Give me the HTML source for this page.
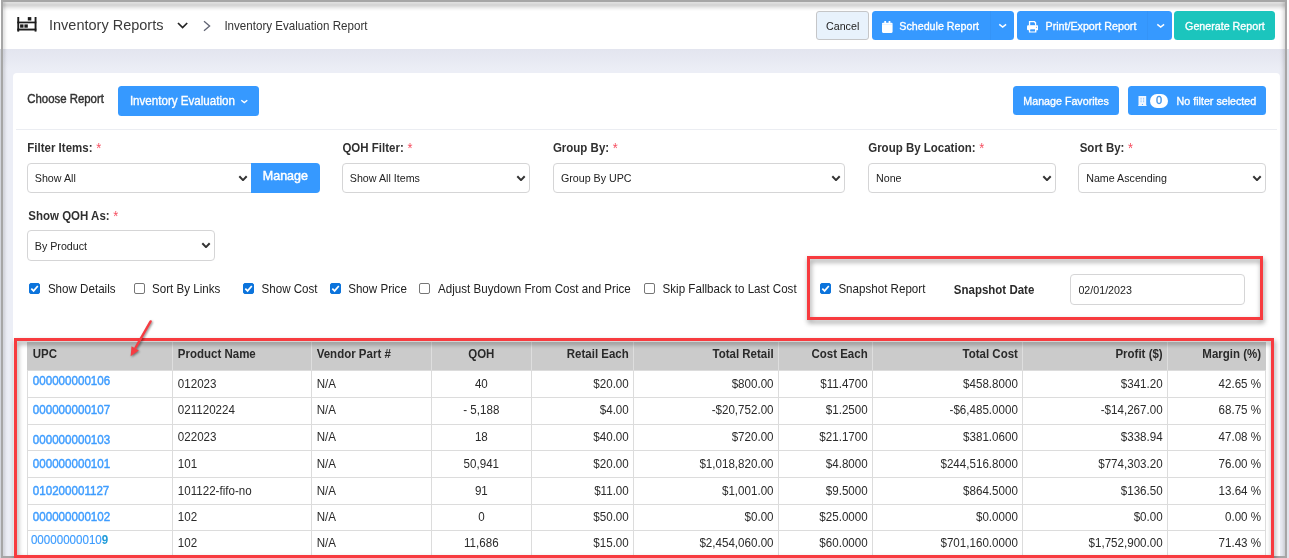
<!DOCTYPE html>
<html lang="en">
<head>
<meta charset="utf-8">
<title>Inventory Evaluation Report</title>
<style>
*{box-sizing:border-box;margin:0;padding:0}
html,body{width:1289px;height:558px;overflow:hidden;background:#fff}
body{font-family:"Liberation Sans",Arial,sans-serif;color:#222;position:relative;font-size:12px}
.abs{position:absolute}
.t{position:absolute;white-space:nowrap;transform-origin:0 84.65%}
.t i{color:#f64e60;font-style:normal;font-weight:normal;font-size:1.12em;line-height:0;position:relative;left:.5px;top:.6px}
.btn{position:absolute;background:#3699ff;border-radius:3.5px}
.sel{position:absolute;border:1px solid #d5d5d6;border-radius:4px;background:#fff}
.cb{position:absolute;width:11px;height:11px;border:1px solid #767676;border-radius:2px;background:#fff}
.cb.on{background:#0c74dc;border-color:#0c74dc}
.cb svg{position:absolute;left:-1px;top:-1px}
.redbox{position:absolute;border:3px solid #f73b3f;filter:drop-shadow(1.5px 3.5px 2.500px rgba(0,0,0,.42));pointer-events:none}
.hl{position:absolute;height:1px;background:#dcdcdc}
.vl{position:absolute;width:1px;background:#dcdcdc}
</style>
</head>
<body>
<div class="abs" style="left:1px;top:0;width:1286px;height:558px;background:#eceef6;border:2px solid #a6a6a6"></div>
<div class="abs" style="left:3px;top:2px;width:1282px;height:47px;background:#fff"></div>
<div class="abs" style="left:3px;top:49px;width:1282px;height:24px;background:linear-gradient(to bottom,rgba(70,70,120,.055),rgba(70,70,120,.03) 40%,rgba(70,70,120,0) 90%)"></div>
<div class="abs" style="left:13px;top:73px;width:1267px;height:483px;background:#fff;border-radius:4px 4px 0 0"></div>
<svg class="abs" style="left:17px;top:17px" width="20" height="15" viewBox="0 0 20 15"><g fill="#1c1c1c"><rect x="0.3" y="0" width="1.9" height="14.6"/><rect x="17.6" y="0" width="1.9" height="14.6"/><rect x="0.3" y="4.6" width="19" height="1.7"/><rect x="0.3" y="11.6" width="19" height="1.9"/><rect x="10.800" y="0.100" width="3.500" height="3.400"/><rect x="3.100" y="7.400" width="3.400" height="3.300"/><rect x="7.400" y="7.400" width="3.400" height="3.300"/></g></svg>
<div class="t" style="left:49.00px;top:17.93px;font-size:14.5px;line-height:14.5px;color:#3a3a3a;transform:scaleY(1.07);">Inventory Reports</div>
<svg class="abs" style="left:176px;top:21px" width="13" height="9" viewBox="0 0 13 9"><path d="M2 2 L6.600 6.500 L11.200 2" fill="none" stroke="#222" stroke-width="1.7"/></svg>
<svg class="abs" style="left:202px;top:20px" width="10" height="12" viewBox="0 0 10 12"><path d="M2 1.3 L7.600 6 L2 10.700" fill="none" stroke="#5f6272" stroke-width="1.3"/></svg>
<div class="t" style="left:224.40px;top:20.38px;font-size:11.6px;line-height:11.6px;color:#333;transform:scaleY(1.08);">Inventory Evaluation Report</div>
<div class="btn" style="left:816px;top:11px;width:52.6px;height:28.7px;background:#e8f2fc;border:1px solid #c5c6c8;border-radius:3px"></div>
<div class="t" style="left:826.00px;top:20.84px;font-size:10.7px;line-height:10.7px;color:#222;transform:scaleY(1.03);">Cancel</div>
<div class="btn" style="left:872px;top:11px;width:142px;height:28.7px"></div>
<div class="abs" style="left:989.5px;top:11px;width:1px;height:28.7px;background:rgba(0,0,40,.03)"></div>
<svg class="abs" style="left:882px;top:21px" width="10.600" height="12" viewBox="0 0 10.600 12"><path fill="#fff" d="M0 2.800a1 1 0 0 1 1-1h8.600a1 1 0 0 1 1 1v8a1.100 1.100 0 0 1-1.100 1.100H1.100a1.100 1.100 0 0 1-1.100-1.100z M2.300 0.100h1.800v2.500H2.300z M6.600 0.100h1.800v2.500H6.600z"/><rect x="0" y="3.500" width="10.600" height="0.500" fill="#3699ff" opacity=".25"/></svg>
<div class="t" style="left:899.30px;top:20.84px;font-size:10.7px;line-height:10.7px;color:#fff;transform:scaleY(1.03);-webkit-text-stroke:.33px #fff;">Schedule Report</div>
<svg class="abs" style="left:997.8px;top:23.4px" width="9.4" height="5.3" viewBox="-1 -1 9.4 5.3"><path d="M0.3 0.3 L3.7 3.0 L7.1000000000000005 0.3" fill="none" stroke="#fff" stroke-width="1.5"/></svg>
<div class="btn" style="left:1017.2px;top:11px;width:154.6px;height:28.7px"></div>
<div class="abs" style="left:1147px;top:11px;width:1px;height:28.7px;background:rgba(0,0,40,.03)"></div>
<svg class="abs" style="left:1027.100px;top:21.100px" width="11.400" height="11.600" viewBox="0 0 11.400 11.600"><path fill="#fff" fill-rule="evenodd" d="M1.900 0h5.800l1.500 1.500v3.300h-7.300z M3.200 1.300h4.100v0.900h0.700v2.400h-4.800z"/><rect x="0" y="4.300" width="11.400" height="4.900" rx="1.200" fill="#fff"/><path fill="#fff" fill-rule="evenodd" d="M1.900 7.400h7.500v4.200h-7.500z M3.300 8.500h4.700v1.800h-4.700z"/><rect x="3.300" y="8.300" width="4.700" height="2" fill="#3699ff"/><circle cx="9.400" cy="6.200" r="0.500" fill="#3699ff"/></svg>
<div class="t" style="left:1045.50px;top:20.84px;font-size:10.7px;line-height:10.7px;color:#fff;transform:scaleY(1.03);-webkit-text-stroke:.33px #fff;">Print/Export Report</div>
<svg class="abs" style="left:1155.8px;top:23.4px" width="9.4" height="5.3" viewBox="-1 -1 9.4 5.3"><path d="M0.3 0.3 L3.7 3.0 L7.1000000000000005 0.3" fill="none" stroke="#fff" stroke-width="1.5"/></svg>
<div class="btn" style="left:1174.2px;top:11px;width:100.8px;height:28.7px;background:#1bc5bd"></div>
<div class="t" style="left:1185.10px;top:20.84px;font-size:10.7px;line-height:10.7px;color:#fff;transform:scaleY(1.03);-webkit-text-stroke:.33px #fff;">Generate Report</div>
<div class="t" style="left:27.30px;top:93.55px;font-size:11.4px;line-height:11.4px;color:#333;transform:scaleY(1.08);-webkit-text-stroke:.4px #333;">Choose Report</div>
<div class="btn" style="left:118px;top:86px;width:141px;height:29.8px"></div>
<div class="t" style="left:129.90px;top:95.18px;font-size:11.6px;line-height:11.6px;color:#fff;transform:scaleY(1.08);-webkit-text-stroke:.33px #fff;">Inventory Evaluation</div>
<svg class="abs" style="left:240.2px;top:98.9px" width="8.6" height="4.9" viewBox="-1 -1 8.6 4.9"><path d="M0.3 0.3 L3.3 2.6 L6.3 0.3" fill="none" stroke="#fff" stroke-width="1.4"/></svg>
<div class="btn" style="left:1013px;top:86px;width:106px;height:29px"></div>
<div class="t" style="left:1023.30px;top:95.94px;font-size:10.7px;line-height:10.7px;color:#fff;transform:scaleY(1.03);-webkit-text-stroke:.33px #fff;">Manage Favorites</div>
<div class="btn" style="left:1128px;top:86px;width:138.2px;height:29px"></div>
<svg class="abs" style="left:1138px;top:95.900px" width="8.800" height="10.400" viewBox="0 0 8.800 10.400"><rect x="0.500" y="0" width="7.700" height="10" fill="#eef5ff"/><rect x="0" y="9.500" width="8.800" height="0.900" fill="#eef5ff"/><g fill="#3699ff" opacity=".65"><rect x="2.600" y="1.800" width="0.900" height="1"/><rect x="5.200" y="1.800" width="0.900" height="1"/><rect x="2.600" y="3.500" width="0.900" height="1"/><rect x="5.200" y="3.500" width="0.900" height="1"/><rect x="2.600" y="5.200" width="0.900" height="1"/><rect x="5.200" y="5.200" width="0.900" height="1"/></g><circle cx="4.400" cy="8.500" r="0.550" fill="#3699ff"/></svg>
<div class="abs" style="left:1150px;top:94.100px;width:18px;height:14px;border-radius:7px;background:#fff"></div>
<div class="t" style="left:1156.05px;top:94.79px;font-size:11px;line-height:11px;color:#3a8ee6;transform:scaleY(1.04);-webkit-text-stroke:.3px #3a8ee6;">0</div>
<div class="t" style="left:1176.60px;top:95.94px;font-size:10.7px;line-height:10.7px;color:#fff;transform:scaleY(1.03);-webkit-text-stroke:.33px #fff;">No filter selected</div>
<div class="abs" style="left:16px;top:129px;width:1261px;height:1px;background:#ebedf2"></div>
<div class="t" style="left:27.30px;top:143.07px;font-size:11.5px;line-height:11.5px;color:#303030;transform:scaleY(1.08);font-weight:bold;">Filter Items: <i>*</i></div>
<div class="t" style="left:342.40px;top:143.07px;font-size:11.5px;line-height:11.5px;color:#303030;transform:scaleY(1.08);font-weight:bold;">QOH Filter: <i>*</i></div>
<div class="t" style="left:552.90px;top:143.07px;font-size:11.5px;line-height:11.5px;color:#303030;transform:scaleY(1.08);font-weight:bold;">Group By: <i>*</i></div>
<div class="t" style="left:868.20px;top:143.07px;font-size:11.5px;line-height:11.5px;color:#303030;transform:scaleY(1.08);font-weight:bold;">Group By Location: <i>*</i></div>
<div class="t" style="left:1079.70px;top:143.07px;font-size:11.5px;line-height:11.5px;color:#303030;transform:scaleY(1.08);font-weight:bold;">Sort By: <i>*</i></div>
<div class="t" style="left:28.30px;top:210.87px;font-size:11.5px;line-height:11.5px;color:#303030;transform:scaleY(1.08);font-weight:bold;">Show QOH As: <i>*</i></div>
<div class="sel" style="left:27.2px;top:163.4px;width:224.8px;height:29.3px;border-radius:4px 0 0 4px"></div>
<div class="t" style="left:34.80px;top:172.94px;font-size:10.7px;line-height:10.7px;color:#222;transform:scaleY(1.03);">Show All</div>
<svg class="abs" style="left:238.3px;top:174.9px" width="10.0" height="6.4" viewBox="-1 -1 10.0 6.4"><path d="M0.3 0.3 L4.0 4.1000000000000005 L7.7 0.3" fill="none" stroke="#333" stroke-width="2.0"/></svg>
<div class="btn" style="left:251.2px;top:163.3px;width:68.8px;height:29.4px;border-radius:0 4px 4px 0"></div>
<div class="t" style="left:262.80px;top:170.12px;font-size:12.5px;line-height:12.5px;color:#fff;transform:scaleY(1.04);-webkit-text-stroke:.45px #fff;">Manage</div>
<div class="sel" style="left:342px;top:163.4px;width:187.7px;height:29.3px;border-radius:4px"></div>
<div class="t" style="left:349.80px;top:172.94px;font-size:10.7px;line-height:10.7px;color:#222;transform:scaleY(1.03);">Show All Items</div>
<svg class="abs" style="left:516.0px;top:174.9px" width="10.0" height="6.4" viewBox="-1 -1 10.0 6.4"><path d="M0.3 0.3 L4.0 4.1000000000000005 L7.7 0.3" fill="none" stroke="#333" stroke-width="2.0"/></svg>
<div class="sel" style="left:553.2px;top:163.4px;width:291.8px;height:29.3px;border-radius:4px"></div>
<div class="t" style="left:560.90px;top:172.94px;font-size:10.7px;line-height:10.7px;color:#222;transform:scaleY(1.03);">Group By UPC</div>
<svg class="abs" style="left:831.3px;top:174.9px" width="10.0" height="6.4" viewBox="-1 -1 10.0 6.4"><path d="M0.3 0.3 L4.0 4.1000000000000005 L7.7 0.3" fill="none" stroke="#333" stroke-width="2.0"/></svg>
<div class="sel" style="left:868.4px;top:163.4px;width:187.4px;height:29.3px;border-radius:4px"></div>
<div class="t" style="left:876.00px;top:172.94px;font-size:10.7px;line-height:10.7px;color:#222;transform:scaleY(1.03);">None</div>
<svg class="abs" style="left:1042.1px;top:174.9px" width="10.0" height="6.4" viewBox="-1 -1 10.0 6.4"><path d="M0.3 0.3 L4.0 4.1000000000000005 L7.7 0.3" fill="none" stroke="#333" stroke-width="2.0"/></svg>
<div class="sel" style="left:1078.3px;top:163.4px;width:187.7px;height:29.3px;border-radius:4px"></div>
<div class="t" style="left:1086.20px;top:172.94px;font-size:10.7px;line-height:10.7px;color:#222;transform:scaleY(1.03);">Name Ascending</div>
<svg class="abs" style="left:1252.3px;top:174.9px" width="10.0" height="6.4" viewBox="-1 -1 10.0 6.4"><path d="M0.3 0.3 L4.0 4.1000000000000005 L7.7 0.3" fill="none" stroke="#333" stroke-width="2.0"/></svg>
<div class="sel" style="left:27.2px;top:230.4px;width:187.6px;height:30.3px;border-radius:4px"></div>
<div class="t" style="left:34.80px;top:241.24px;font-size:10.7px;line-height:10.7px;color:#222;transform:scaleY(1.03);">By Product</div>
<svg class="abs" style="left:201.10000000000002px;top:241.9px" width="10.0" height="6.4" viewBox="-1 -1 10.0 6.4"><path d="M0.3 0.3 L4.0 4.1000000000000005 L7.7 0.3" fill="none" stroke="#333" stroke-width="2.0"/></svg>
<div class="cb on" style="left:29.3px;top:283.2px"><svg width="11" height="11" viewBox="0 0 11 11"><path d="M2.300 5.600 L4.600 7.900 L8.800 3" fill="none" stroke="#fff" stroke-width="1.7"/></svg></div>
<div class="t" style="left:47.90px;top:282.98px;font-size:11.6px;line-height:11.6px;color:#222;transform:scaleY(1.08);">Show Details</div>
<div class="cb" style="left:134.2px;top:283.2px"></div>
<div class="t" style="left:152.00px;top:282.98px;font-size:11.6px;line-height:11.6px;color:#222;transform:scaleY(1.08);">Sort By Links</div>
<div class="cb on" style="left:243.2px;top:283.2px"><svg width="11" height="11" viewBox="0 0 11 11"><path d="M2.300 5.600 L4.600 7.900 L8.800 3" fill="none" stroke="#fff" stroke-width="1.7"/></svg></div>
<div class="t" style="left:261.50px;top:282.98px;font-size:11.6px;line-height:11.6px;color:#222;transform:scaleY(1.08);">Show Cost</div>
<div class="cb on" style="left:330px;top:283.2px"><svg width="11" height="11" viewBox="0 0 11 11"><path d="M2.300 5.600 L4.600 7.900 L8.800 3" fill="none" stroke="#fff" stroke-width="1.7"/></svg></div>
<div class="t" style="left:348.20px;top:282.98px;font-size:11.6px;line-height:11.6px;color:#222;transform:scaleY(1.08);">Show Price</div>
<div class="cb" style="left:419.4px;top:283.2px"></div>
<div class="t" style="left:438.10px;top:282.98px;font-size:11.6px;line-height:11.6px;color:#222;transform:scaleY(1.08);">Adjust Buydown From Cost and Price</div>
<div class="cb" style="left:644.4px;top:283.2px"></div>
<div class="t" style="left:662.60px;top:282.98px;font-size:11.6px;line-height:11.6px;color:#222;transform:scaleY(1.08);">Skip Fallback to Last Cost</div>
<div class="cb on" style="left:820px;top:283.2px"><svg width="11" height="11" viewBox="0 0 11 11"><path d="M2.300 5.600 L4.600 7.900 L8.800 3" fill="none" stroke="#fff" stroke-width="1.7"/></svg></div>
<div class="t" style="left:838.40px;top:282.98px;font-size:11.6px;line-height:11.6px;color:#222;transform:scaleY(1.08);">Snapshot Report</div>
<div class="t" style="left:953.80px;top:285.27px;font-size:11.5px;line-height:11.5px;color:#2a2a2a;transform:scaleY(1.08);font-weight:bold;">Snapshot Date</div>
<div class="sel" style="left:1070.2px;top:274.4px;width:174.6px;height:30.2px"></div>
<div class="t" style="left:1078.40px;top:284.64px;font-size:10.7px;line-height:10.7px;color:#222;transform:scaleY(1.03);">02/01/2023</div>
<div class="redbox" style="left:807px;top:256.2px;width:456.3px;height:64.2px"></div>
<div class="abs" style="left:27.4px;top:341.5px;width:1238.9px;height:28.9px;background:#cbcbcb"></div>
<div class="vl" style="left:171.9px;top:341.5px;height:28.6px;background:#dedede"></div>
<div class="vl" style="left:310.8px;top:341.5px;height:28.6px;background:#dedede"></div>
<div class="vl" style="left:430.8px;top:341.5px;height:28.6px;background:#dedede"></div>
<div class="vl" style="left:530.9px;top:341.5px;height:28.6px;background:#dedede"></div>
<div class="vl" style="left:632.9px;top:341.5px;height:28.6px;background:#dedede"></div>
<div class="vl" style="left:777.7px;top:341.5px;height:28.6px;background:#dedede"></div>
<div class="vl" style="left:871.8px;top:341.5px;height:28.6px;background:#dedede"></div>
<div class="vl" style="left:1022.0px;top:341.5px;height:28.6px;background:#dedede"></div>
<div class="vl" style="left:1166.8px;top:341.5px;height:28.6px;background:#dedede"></div>
<div class="vl" style="left:26.9px;top:370.1px;height:184.9px"></div>
<div class="vl" style="left:171.9px;top:370.1px;height:184.9px"></div>
<div class="vl" style="left:310.8px;top:370.1px;height:184.9px"></div>
<div class="vl" style="left:430.8px;top:370.1px;height:184.9px"></div>
<div class="vl" style="left:530.9px;top:370.1px;height:184.9px"></div>
<div class="vl" style="left:632.9px;top:370.1px;height:184.9px"></div>
<div class="vl" style="left:777.7px;top:370.1px;height:184.9px"></div>
<div class="vl" style="left:871.8px;top:370.1px;height:184.9px"></div>
<div class="vl" style="left:1022.0px;top:370.1px;height:184.9px"></div>
<div class="vl" style="left:1166.8px;top:370.1px;height:184.9px"></div>
<div class="vl" style="left:1265.2px;top:370.1px;height:184.9px"></div>
<div class="hl" style="left:27.4px;top:369.6px;width:1238.3px"></div>
<div class="hl" style="left:27.4px;top:396.7px;width:1238.3px"></div>
<div class="hl" style="left:27.4px;top:423.8px;width:1238.3px"></div>
<div class="hl" style="left:27.4px;top:449.9px;width:1238.3px"></div>
<div class="hl" style="left:27.4px;top:477.0px;width:1238.3px"></div>
<div class="hl" style="left:27.4px;top:503.7px;width:1238.3px"></div>
<div class="hl" style="left:27.4px;top:529.9px;width:1238.3px"></div>
<div class="hl" style="left:27.4px;top:556.5px;width:1238.3px"></div>
<div class="t" style="left:32.80px;top:349.17px;font-size:11.5px;line-height:11.5px;color:#2a2a2a;transform:scaleY(1.08);font-weight:bold;">UPC</div>
<div class="t" style="left:177.80px;top:349.17px;font-size:11.5px;line-height:11.5px;color:#2a2a2a;transform:scaleY(1.08);font-weight:bold;">Product Name</div>
<div class="t" style="left:316.70px;top:349.17px;font-size:11.5px;line-height:11.5px;color:#2a2a2a;transform:scaleY(1.08);font-weight:bold;">Vendor Part #</div>
<div class="t" style="left:468.24px;top:349.17px;font-size:11.5px;line-height:11.5px;color:#2a2a2a;transform:scaleY(1.08);font-weight:bold;">QOH</div>
<div class="t" style="left:566.81px;top:349.17px;font-size:11.5px;line-height:11.5px;color:#2a2a2a;transform:scaleY(1.08);font-weight:bold;">Retail Each</div>
<div class="t" style="left:712.48px;top:349.17px;font-size:11.5px;line-height:11.5px;color:#2a2a2a;transform:scaleY(1.08);font-weight:bold;">Total Retail</div>
<div class="t" style="left:811.46px;top:349.17px;font-size:11.5px;line-height:11.5px;color:#2a2a2a;transform:scaleY(1.08);font-weight:bold;">Cost Each</div>
<div class="t" style="left:962.53px;top:349.17px;font-size:11.5px;line-height:11.5px;color:#2a2a2a;transform:scaleY(1.08);font-weight:bold;">Total Cost</div>
<div class="t" style="left:1115.43px;top:349.17px;font-size:11.5px;line-height:11.5px;color:#2a2a2a;transform:scaleY(1.08);font-weight:bold;">Profit ($)</div>
<div class="t" style="left:1202.34px;top:349.17px;font-size:11.5px;line-height:11.5px;color:#2a2a2a;transform:scaleY(1.08);font-weight:bold;">Margin (%)</div>
<a class="t" style="left:32.80px;top:375.38px;font-size:11.6px;line-height:11.6px;color:#3d9cff;-webkit-text-stroke:0.4px #3d9cff;transform:scaleY(1.08)">000000000106</a>
<div class="t" style="left:177.80px;top:377.78px;font-size:11.6px;line-height:11.6px;color:#2a2a2a;transform:scaleY(1.08);">012023</div>
<div class="t" style="left:316.70px;top:377.78px;font-size:11.6px;line-height:11.6px;color:#2a2a2a;transform:scaleY(1.08);">N/A</div>
<div class="t" style="left:474.91px;top:377.78px;font-size:11.6px;line-height:11.6px;color:#2a2a2a;transform:scaleY(1.08);">40</div>
<div class="t" style="left:593.30px;top:377.78px;font-size:11.6px;line-height:11.6px;color:#2a2a2a;transform:scaleY(1.08);">$20.00</div>
<div class="t" style="left:731.67px;top:377.78px;font-size:11.6px;line-height:11.6px;color:#2a2a2a;transform:scaleY(1.08);">$800.00</div>
<div class="t" style="left:820.20px;top:377.78px;font-size:11.6px;line-height:11.6px;color:#2a2a2a;transform:scaleY(1.08);">$11.4700</div>
<div class="t" style="left:963.09px;top:377.78px;font-size:11.6px;line-height:11.6px;color:#2a2a2a;transform:scaleY(1.08);">$458.8000</div>
<div class="t" style="left:1120.77px;top:377.78px;font-size:11.6px;line-height:11.6px;color:#2a2a2a;transform:scaleY(1.08);">$341.20</div>
<div class="t" style="left:1218.53px;top:377.78px;font-size:11.6px;line-height:11.6px;color:#2a2a2a;transform:scaleY(1.08);">42.65 %</div>
<a class="t" style="left:32.80px;top:404.18px;font-size:11.6px;line-height:11.6px;color:#3d9cff;-webkit-text-stroke:0.4px #3d9cff;transform:scaleY(1.08)">000000000107</a>
<div class="t" style="left:177.80px;top:404.18px;font-size:11.6px;line-height:11.6px;color:#2a2a2a;transform:scaleY(1.08);">021120224</div>
<div class="t" style="left:316.70px;top:404.18px;font-size:11.6px;line-height:11.6px;color:#2a2a2a;transform:scaleY(1.08);">N/A</div>
<div class="t" style="left:463.28px;top:404.18px;font-size:11.6px;line-height:11.6px;color:#2a2a2a;transform:scaleY(1.08);">- 5,188</div>
<div class="t" style="left:599.74px;top:404.18px;font-size:11.6px;line-height:11.6px;color:#2a2a2a;transform:scaleY(1.08);">$4.00</div>
<div class="t" style="left:711.66px;top:404.18px;font-size:11.6px;line-height:11.6px;color:#2a2a2a;transform:scaleY(1.08);">-$20,752.00</div>
<div class="t" style="left:825.77px;top:404.18px;font-size:11.6px;line-height:11.6px;color:#2a2a2a;transform:scaleY(1.08);">$1.2500</div>
<div class="t" style="left:949.52px;top:404.18px;font-size:11.6px;line-height:11.6px;color:#2a2a2a;transform:scaleY(1.08);">-$6,485.0000</div>
<div class="t" style="left:1100.76px;top:404.18px;font-size:11.6px;line-height:11.6px;color:#2a2a2a;transform:scaleY(1.08);">-$14,267.00</div>
<div class="t" style="left:1218.53px;top:404.18px;font-size:11.6px;line-height:11.6px;color:#2a2a2a;transform:scaleY(1.08);">68.75 %</div>
<a class="t" style="left:32.80px;top:433.88px;font-size:11.6px;line-height:11.6px;color:#3d9cff;-webkit-text-stroke:0.4px #3d9cff;transform:scaleY(1.08)">000000000103</a>
<div class="t" style="left:177.80px;top:430.88px;font-size:11.6px;line-height:11.6px;color:#2a2a2a;transform:scaleY(1.08);">022023</div>
<div class="t" style="left:316.70px;top:430.88px;font-size:11.6px;line-height:11.6px;color:#2a2a2a;transform:scaleY(1.08);">N/A</div>
<div class="t" style="left:474.91px;top:430.88px;font-size:11.6px;line-height:11.6px;color:#2a2a2a;transform:scaleY(1.08);">18</div>
<div class="t" style="left:593.30px;top:430.88px;font-size:11.6px;line-height:11.6px;color:#2a2a2a;transform:scaleY(1.08);">$40.00</div>
<div class="t" style="left:731.67px;top:430.88px;font-size:11.6px;line-height:11.6px;color:#2a2a2a;transform:scaleY(1.08);">$720.00</div>
<div class="t" style="left:819.33px;top:430.88px;font-size:11.6px;line-height:11.6px;color:#2a2a2a;transform:scaleY(1.08);">$21.1700</div>
<div class="t" style="left:963.09px;top:430.88px;font-size:11.6px;line-height:11.6px;color:#2a2a2a;transform:scaleY(1.08);">$381.0600</div>
<div class="t" style="left:1120.77px;top:430.88px;font-size:11.6px;line-height:11.6px;color:#2a2a2a;transform:scaleY(1.08);">$338.94</div>
<div class="t" style="left:1218.53px;top:430.88px;font-size:11.6px;line-height:11.6px;color:#2a2a2a;transform:scaleY(1.08);">47.08 %</div>
<a class="t" style="left:32.80px;top:457.88px;font-size:11.6px;line-height:11.6px;color:#3d9cff;-webkit-text-stroke:0.4px #3d9cff;transform:scaleY(1.08)">000000000101</a>
<div class="t" style="left:177.80px;top:457.88px;font-size:11.6px;line-height:11.6px;color:#2a2a2a;transform:scaleY(1.08);">101</div>
<div class="t" style="left:316.70px;top:457.88px;font-size:11.6px;line-height:11.6px;color:#2a2a2a;transform:scaleY(1.08);">N/A</div>
<div class="t" style="left:463.60px;top:457.88px;font-size:11.6px;line-height:11.6px;color:#2a2a2a;transform:scaleY(1.08);">50,941</div>
<div class="t" style="left:593.30px;top:457.88px;font-size:11.6px;line-height:11.6px;color:#2a2a2a;transform:scaleY(1.08);">$20.00</div>
<div class="t" style="left:699.42px;top:457.88px;font-size:11.6px;line-height:11.6px;color:#2a2a2a;transform:scaleY(1.08);">$1,018,820.00</div>
<div class="t" style="left:825.77px;top:457.88px;font-size:11.6px;line-height:11.6px;color:#2a2a2a;transform:scaleY(1.08);">$4.8000</div>
<div class="t" style="left:940.47px;top:457.88px;font-size:11.6px;line-height:11.6px;color:#2a2a2a;transform:scaleY(1.08);">$244,516.8000</div>
<div class="t" style="left:1098.20px;top:457.88px;font-size:11.6px;line-height:11.6px;color:#2a2a2a;transform:scaleY(1.08);">$774,303.20</div>
<div class="t" style="left:1218.53px;top:457.88px;font-size:11.6px;line-height:11.6px;color:#2a2a2a;transform:scaleY(1.08);">76.00 %</div>
<a class="t" style="left:32.80px;top:484.68px;font-size:11.6px;line-height:11.6px;color:#3d9cff;-webkit-text-stroke:0.4px #3d9cff;transform:scaleY(1.08)">010200001127</a>
<div class="t" style="left:177.80px;top:484.68px;font-size:11.6px;line-height:11.6px;color:#2a2a2a;transform:scaleY(1.08);">101122-fifo-no</div>
<div class="t" style="left:316.70px;top:484.68px;font-size:11.6px;line-height:11.6px;color:#2a2a2a;transform:scaleY(1.08);">N/A</div>
<div class="t" style="left:474.91px;top:484.68px;font-size:11.6px;line-height:11.6px;color:#2a2a2a;transform:scaleY(1.08);">91</div>
<div class="t" style="left:594.17px;top:484.68px;font-size:11.6px;line-height:11.6px;color:#2a2a2a;transform:scaleY(1.08);">$11.00</div>
<div class="t" style="left:721.98px;top:484.68px;font-size:11.6px;line-height:11.6px;color:#2a2a2a;transform:scaleY(1.08);">$1,001.00</div>
<div class="t" style="left:825.77px;top:484.68px;font-size:11.6px;line-height:11.6px;color:#2a2a2a;transform:scaleY(1.08);">$9.5000</div>
<div class="t" style="left:963.09px;top:484.68px;font-size:11.6px;line-height:11.6px;color:#2a2a2a;transform:scaleY(1.08);">$864.5000</div>
<div class="t" style="left:1120.77px;top:484.68px;font-size:11.6px;line-height:11.6px;color:#2a2a2a;transform:scaleY(1.08);">$136.50</div>
<div class="t" style="left:1218.53px;top:484.68px;font-size:11.6px;line-height:11.6px;color:#2a2a2a;transform:scaleY(1.08);">13.64 %</div>
<a class="t" style="left:32.80px;top:511.08px;font-size:11.6px;line-height:11.6px;color:#3d9cff;-webkit-text-stroke:0.4px #3d9cff;transform:scaleY(1.08)">000000000102</a>
<div class="t" style="left:177.80px;top:511.08px;font-size:11.6px;line-height:11.6px;color:#2a2a2a;transform:scaleY(1.08);">102</div>
<div class="t" style="left:316.70px;top:511.08px;font-size:11.6px;line-height:11.6px;color:#2a2a2a;transform:scaleY(1.08);">N/A</div>
<div class="t" style="left:478.13px;top:511.08px;font-size:11.6px;line-height:11.6px;color:#2a2a2a;transform:scaleY(1.08);">0</div>
<div class="t" style="left:593.30px;top:511.08px;font-size:11.6px;line-height:11.6px;color:#2a2a2a;transform:scaleY(1.08);">$50.00</div>
<div class="t" style="left:744.54px;top:511.08px;font-size:11.6px;line-height:11.6px;color:#2a2a2a;transform:scaleY(1.08);">$0.00</div>
<div class="t" style="left:819.33px;top:511.08px;font-size:11.6px;line-height:11.6px;color:#2a2a2a;transform:scaleY(1.08);">$25.0000</div>
<div class="t" style="left:975.97px;top:511.08px;font-size:11.6px;line-height:11.6px;color:#2a2a2a;transform:scaleY(1.08);">$0.0000</div>
<div class="t" style="left:1133.64px;top:511.08px;font-size:11.6px;line-height:11.6px;color:#2a2a2a;transform:scaleY(1.08);">$0.00</div>
<div class="t" style="left:1224.97px;top:511.08px;font-size:11.6px;line-height:11.6px;color:#2a2a2a;transform:scaleY(1.08);">0.00 %</div>
<a class="t" style="left:30.90px;top:534.38px;font-size:11.6px;line-height:11.6px;color:#3d9cff;-webkit-text-stroke:0.15px #3d9cff;transform:scaleY(1.08)">00000000010<b style="color:#1f9bd8;-webkit-text-stroke:0">9</b></a>
<div class="t" style="left:177.80px;top:537.08px;font-size:11.6px;line-height:11.6px;color:#2a2a2a;transform:scaleY(1.08);">102</div>
<div class="t" style="left:316.70px;top:537.08px;font-size:11.6px;line-height:11.6px;color:#2a2a2a;transform:scaleY(1.08);">N/A</div>
<div class="t" style="left:464.04px;top:537.08px;font-size:11.6px;line-height:11.6px;color:#2a2a2a;transform:scaleY(1.08);">11,686</div>
<div class="t" style="left:593.30px;top:537.08px;font-size:11.6px;line-height:11.6px;color:#2a2a2a;transform:scaleY(1.08);">$15.00</div>
<div class="t" style="left:699.42px;top:537.08px;font-size:11.6px;line-height:11.6px;color:#2a2a2a;transform:scaleY(1.08);">$2,454,060.00</div>
<div class="t" style="left:819.33px;top:537.08px;font-size:11.6px;line-height:11.6px;color:#2a2a2a;transform:scaleY(1.08);">$60.0000</div>
<div class="t" style="left:940.47px;top:537.08px;font-size:11.6px;line-height:11.6px;color:#2a2a2a;transform:scaleY(1.08);">$701,160.0000</div>
<div class="t" style="left:1088.52px;top:537.08px;font-size:11.6px;line-height:11.6px;color:#2a2a2a;transform:scaleY(1.08);">$1,752,900.00</div>
<div class="t" style="left:1218.53px;top:537.08px;font-size:11.6px;line-height:11.6px;color:#2a2a2a;transform:scaleY(1.08);">71.43 %</div>
<div class="redbox" style="left:14.300px;top:337.800px;width:1260.100px;height:220.200px"></div>
<svg class="abs" style="left:120px;top:314px;overflow:visible" width="40" height="50" viewBox="120 314 40 50"><g filter="drop-shadow(1.500px 1.800px 1.200px rgba(0,0,0,.45))"><path d="M150.600 321.400 L135.600 347.600" stroke="#f63c42" stroke-width="2.400" stroke-linecap="round" fill="none"/><path d="M130.600 356.300 L131.500 346.300 L138.800 350.500z" fill="#f63c42"/></g></svg>
<div class="abs" style="left:3px;top:2px;width:1282px;height:10px;background:linear-gradient(to bottom,rgba(0,0,0,.125) 0,rgba(0,0,0,.125) 0.5px,rgba(0,0,0,.14) 1.5px,rgba(0,0,0,.165) 2.5px,rgba(0,0,0,.16) 3.5px,rgba(0,0,0,.13) 4.5px,rgba(0,0,0,.09) 5.5px,rgba(0,0,0,.06) 6.5px,rgba(0,0,0,.03) 7.5px,rgba(0,0,0,.012) 8.5px,rgba(0,0,0,0) 9.5px)"></div>
<div class="abs" style="left:3px;top:2px;width:6px;height:554px;background:linear-gradient(to right,rgba(0,0,0,.11) 0,rgba(0,0,0,.10) 0.5px,rgba(0,0,0,.085) 1.5px,rgba(0,0,0,.05) 2.5px,rgba(0,0,0,.02) 3.5px,rgba(0,0,0,0) 5px)"></div>
<div class="abs" style="left:1278px;top:2px;width:7px;height:554px;background:linear-gradient(to left,rgba(0,0,0,.13) 0,rgba(0,0,0,.12) 0.5px,rgba(0,0,0,.09) 1.5px,rgba(0,0,0,.055) 2.5px,rgba(0,0,0,.03) 3.5px,rgba(0,0,0,.012) 4.5px,rgba(0,0,0,0) 6px)"></div>
<div class="abs" style="left:0;top:49px;width:1px;height:509px;background:#d2d5dc"></div>
<div class="abs" style="left:1287px;top:49px;width:2px;height:509px;background:#e2e4ec"></div>
</body>
</html>
